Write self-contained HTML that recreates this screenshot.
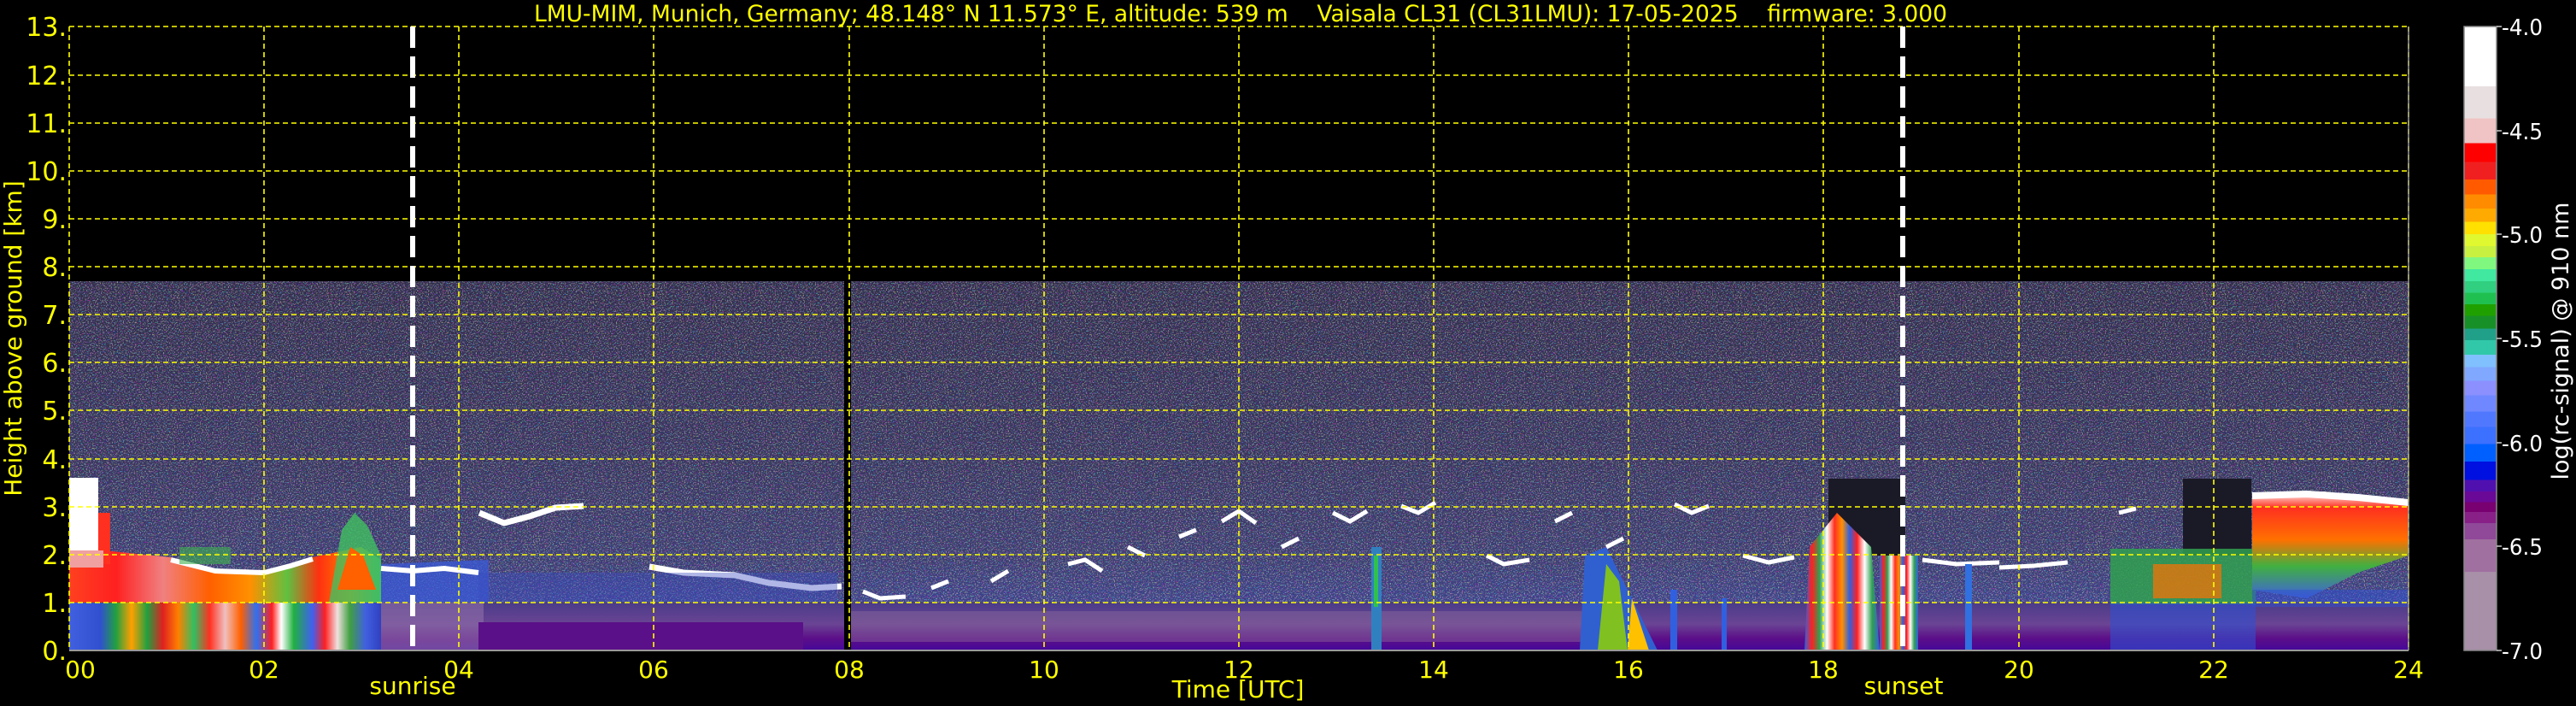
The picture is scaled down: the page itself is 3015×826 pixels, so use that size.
<!DOCTYPE html>
<html><head><meta charset="utf-8"><style>
html,body{margin:0;padding:0;background:#000;}
svg{display:block;}
text{font-family:"DejaVu Sans","Liberation Sans",sans-serif;fill:#ffff00;}
</style></head><body>
<svg width="3015" height="826" viewBox="0 0 3015 826" xmlns="http://www.w3.org/2000/svg">
<defs>
<filter id="spk" x="0" y="0" width="100%" height="100%">
<feTurbulence type="fractalNoise" baseFrequency="0.7" numOctaves="1" seed="5" result="t"/>
<feColorMatrix in="t" type="matrix" values="2.2 0 0 0 -0.7  0 2.2 0 0 -0.7  0 0 2.2 0 -0.5  0 0 0 6 -2.8"/>
</filter>
<linearGradient id="noise" x1="0" y1="0" x2="0" y2="1">
<stop offset="0" stop-color="#302c48"/>
<stop offset="0.5" stop-color="#36345a"/>
<stop offset="0.75" stop-color="#3a3c6c"/>
<stop offset="1" stop-color="#4048a0"/>
</linearGradient>
<linearGradient id="bot" x1="0" y1="0" x2="0" y2="1">
<stop offset="0" stop-color="#4a3c88"/>
<stop offset="0.45" stop-color="#6a4494"/>
<stop offset="0.75" stop-color="#5c0e88"/>
<stop offset="1" stop-color="#44089a"/>
</linearGradient>
<linearGradient id="low" x1="0" y1="0" x2="1" y2="0">
<stop offset="0" stop-color="#4060e0"/><stop offset="0.1" stop-color="#3050d0"/>
<stop offset="0.15" stop-color="#20a040"/><stop offset="0.2" stop-color="#ffa000"/>
<stop offset="0.25" stop-color="#20a040"/><stop offset="0.3" stop-color="#e02020"/>
<stop offset="0.35" stop-color="#ff8000"/><stop offset="0.4" stop-color="#30c060"/>
<stop offset="0.45" stop-color="#ff3020"/><stop offset="0.5" stop-color="#f0c0c0"/>
<stop offset="0.55" stop-color="#ff6000"/><stop offset="0.6" stop-color="#3070f0"/>
<stop offset="0.65" stop-color="#ff2020"/><stop offset="0.68" stop-color="#ffffff"/>
<stop offset="0.72" stop-color="#20b040"/><stop offset="0.78" stop-color="#4060f0"/>
<stop offset="0.82" stop-color="#ff2020"/><stop offset="0.86" stop-color="#f0e0e0"/>
<stop offset="0.9" stop-color="#40a040"/><stop offset="0.95" stop-color="#4060e0"/>
<stop offset="1" stop-color="#3040c0"/>
</linearGradient>
<linearGradient id="mid" x1="0" y1="0" x2="1" y2="0">
<stop offset="0" stop-color="#ff4020"/><stop offset="0.15" stop-color="#ff2020"/>
<stop offset="0.3" stop-color="#f08080"/><stop offset="0.45" stop-color="#ff6000"/>
<stop offset="0.58" stop-color="#ff9000"/><stop offset="0.7" stop-color="#60c040"/>
<stop offset="0.8" stop-color="#ff3010"/><stop offset="0.9" stop-color="#ff8000"/>
<stop offset="1" stop-color="#40b080"/>
</linearGradient>
<linearGradient id="eve" x1="0" y1="0" x2="1" y2="0">
<stop offset="0" stop-color="#3060e0"/><stop offset="0.1" stop-color="#ff2020"/>
<stop offset="0.2" stop-color="#30a050"/><stop offset="0.3" stop-color="#ffffff"/>
<stop offset="0.4" stop-color="#ff3020"/><stop offset="0.5" stop-color="#ff9000"/>
<stop offset="0.6" stop-color="#3060e0"/><stop offset="0.7" stop-color="#ff2020"/>
<stop offset="0.8" stop-color="#ffffff"/><stop offset="0.9" stop-color="#30a050"/>
<stop offset="1" stop-color="#3060e0"/>
</linearGradient>
<linearGradient id="late" x1="0" y1="0" x2="0" y2="1">
<stop offset="0" stop-color="#ffffff"/><stop offset="0.15" stop-color="#ff3020"/>
<stop offset="0.45" stop-color="#ff7000"/><stop offset="0.7" stop-color="#40b040"/>
<stop offset="1" stop-color="#4060e0"/>
</linearGradient>
<linearGradient id="cb" x1="0" y1="0" x2="0" y2="1">
<stop offset="0" stop-color="#fff"/><stop offset="0.096" stop-color="#fff"/>
<stop offset="0.096" stop-color="#e8e0e0"/><stop offset="0.147" stop-color="#e8e0e0"/>
<stop offset="0.147" stop-color="#f0c4c4"/><stop offset="0.187" stop-color="#f0c4c4"/>
<stop offset="0.187" stop-color="#ff0000"/><stop offset="0.217" stop-color="#ff0000"/>
<stop offset="0.217" stop-color="#f02020"/><stop offset="0.245" stop-color="#f02020"/>
<stop offset="0.245" stop-color="#ff5a00"/><stop offset="0.269" stop-color="#ff5a00"/>
<stop offset="0.269" stop-color="#ff8c00"/><stop offset="0.292" stop-color="#ff8c00"/>
<stop offset="0.292" stop-color="#ffaa00"/><stop offset="0.313" stop-color="#ffaa00"/>
<stop offset="0.313" stop-color="#ffe000"/><stop offset="0.333" stop-color="#ffe000"/>
<stop offset="0.333" stop-color="#e0f830"/><stop offset="0.352" stop-color="#e0f830"/>
<stop offset="0.352" stop-color="#c8f040"/><stop offset="0.370" stop-color="#c8f040"/>
<stop offset="0.370" stop-color="#80f880"/><stop offset="0.389" stop-color="#80f880"/>
<stop offset="0.389" stop-color="#40e8a0"/><stop offset="0.408" stop-color="#40e8a0"/>
<stop offset="0.408" stop-color="#30d080"/><stop offset="0.427" stop-color="#30d080"/>
<stop offset="0.427" stop-color="#20c050"/><stop offset="0.445" stop-color="#20c050"/>
<stop offset="0.445" stop-color="#20a000"/><stop offset="0.464" stop-color="#20a000"/>
<stop offset="0.464" stop-color="#189028"/><stop offset="0.484" stop-color="#189028"/>
<stop offset="0.484" stop-color="#20a088"/><stop offset="0.503" stop-color="#20a088"/>
<stop offset="0.503" stop-color="#30c8a8"/><stop offset="0.526" stop-color="#30c8a8"/>
<stop offset="0.526" stop-color="#80c0ff"/><stop offset="0.546" stop-color="#80c0ff"/>
<stop offset="0.546" stop-color="#80a8ff"/><stop offset="0.568" stop-color="#80a8ff"/>
<stop offset="0.568" stop-color="#8c90ff"/><stop offset="0.591" stop-color="#8c90ff"/>
<stop offset="0.591" stop-color="#7088ff"/><stop offset="0.617" stop-color="#7088ff"/>
<stop offset="0.617" stop-color="#5078ff"/><stop offset="0.642" stop-color="#5078ff"/>
<stop offset="0.642" stop-color="#3c70ff"/><stop offset="0.669" stop-color="#3c70ff"/>
<stop offset="0.669" stop-color="#0060ff"/><stop offset="0.697" stop-color="#0060ff"/>
<stop offset="0.697" stop-color="#0010e0"/><stop offset="0.727" stop-color="#0010e0"/>
<stop offset="0.727" stop-color="#5010b0"/><stop offset="0.745" stop-color="#5010b0"/>
<stop offset="0.745" stop-color="#6a0898"/><stop offset="0.762" stop-color="#6a0898"/>
<stop offset="0.762" stop-color="#780070"/><stop offset="0.778" stop-color="#780070"/>
<stop offset="0.778" stop-color="#882088"/><stop offset="0.796" stop-color="#882088"/>
<stop offset="0.796" stop-color="#904898"/><stop offset="0.822" stop-color="#904898"/>
<stop offset="0.822" stop-color="#a070a0"/><stop offset="0.874" stop-color="#a070a0"/>
<stop offset="0.874" stop-color="#a890a8"/><stop offset="1" stop-color="#a890a8"/>
</linearGradient>
</defs>

<!-- noise region -->
<rect x="81" y="329" width="2738" height="432" fill="url(#noise)"/>
<rect x="81" y="329" width="2738" height="432" filter="url(#spk)" opacity="0.55"/>
<rect x="81" y="705" width="2738" height="56" fill="url(#bot)"/>
<rect x="446" y="705" width="120" height="56" fill="#9070a8" opacity="0.6"/>
<rect x="560" y="728" width="380" height="33" fill="#5a1088"/>
<rect x="994" y="715" width="900" height="36" fill="#8a6a9c" opacity="0.45"/>
<!-- evening darker region -->
<rect x="2140" y="560" width="90" height="90" fill="#1a1a26"/>
<rect x="2555" y="560" width="80" height="90" fill="#1a1a26"/>

<!-- early boundary layer -->
<rect x="81" y="700" width="365" height="61" fill="url(#low)"/>
<polygon points="81,640 200,652 252,666 309,668 340,660 366,652 423,640 446,655 446,705 81,705" fill="url(#mid)"/>
<polyline points="200,655 252,668 309,670 340,662 366,654" fill="none" stroke="#fff" stroke-width="6"/>
<polygon points="385,705 400,620 415,600 430,615 446,650 446,705" fill="#40c060" opacity="0.8"/>
<polygon points="395,690 410,640 425,650 440,690" fill="#ff6000"/>
<rect x="81" y="559" width="34" height="85" fill="#ffffff"/>
<rect x="115" y="600" width="14" height="60" fill="#ff3020"/>
<rect x="81" y="644" width="40" height="20" fill="#f0a0a0"/>
<rect x="210" y="640" width="60" height="20" fill="#40b050" opacity="0.6"/>

<!-- post sunrise -->
<polygon points="446,660 572,655 572,705 446,705" fill="#3a5ad8" opacity="0.75"/>
<polyline points="446,665 483,668 520,665 560,670" fill="none" stroke="#fff" stroke-width="6"/>
<polyline points="561,600 590,612 620,604 650,594 683,592" fill="none" stroke="#fff" stroke-width="7"/>
<polyline points="760,663 800,670 860,673 900,682 950,688 985,686" fill="none" stroke="#fff" stroke-width="7"/>
<rect x="560" y="670" width="420" height="35" fill="#3a4cc0" opacity="0.4"/>

<!-- scattered clouds midday -->
<g fill="none" stroke="#fff" stroke-width="5">
<polyline points="1010,692 1030,700 1060,698"/>
<polyline points="1090,688 1110,680"/>
<polyline points="1160,680 1180,668"/>
<polyline points="1250,660 1270,655 1290,668"/>
<polyline points="1320,640 1340,650"/>
<polyline points="1380,628 1400,620"/>
<polyline points="1430,610 1450,598 1470,612"/>
<polyline points="1500,640 1520,630"/>
<polyline points="1560,600 1580,610 1600,598"/>
<polyline points="1640,592 1660,600 1680,588"/>
<polyline points="1740,650 1760,660 1790,655"/>
<polyline points="1820,610 1840,600"/>
<polyline points="1880,640 1900,630"/>
<polyline points="1960,590 1980,600 2000,592"/>
<polyline points="2040,650 2070,658 2100,652"/>
<polyline points="2250,655 2290,660 2340,658"/>
<polyline points="2340,664 2380,662 2420,658"/>
<polyline points="2480,600 2500,595"/>
</g>

<!-- columns -->
<rect x="1605" y="640" width="12" height="121" fill="#3080c0"/>
<rect x="1608" y="650" width="5" height="60" fill="#30c050"/>
<polygon points="1849,761 1855,650 1880,640 1900,680 1940,761" fill="#3060d0"/>
<polygon points="1870,761 1880,660 1895,680 1905,761" fill="#80c020"/>
<polygon points="1905,761 1910,700 1930,761" fill="#ffc000"/>
<rect x="1955" y="690" width="8" height="71" fill="#3060e0"/>
<rect x="2015" y="700" width="6" height="61" fill="#3060e0"/>
<polygon points="2112,761 2118,640 2150,600 2190,640 2200,761" fill="url(#eve)"/>
<rect x="2200" y="650" width="45" height="111" fill="url(#eve)"/>
<rect x="2300" y="660" width="8" height="101" fill="#3070e0"/>

<!-- late evening -->
<rect x="2470" y="642" width="170" height="65" fill="#30a050" opacity="0.85"/>
<rect x="2520" y="660" width="80" height="40" fill="#ff7000" opacity="0.7"/>
<rect x="2470" y="705" width="170" height="56" fill="#3050d0" opacity="0.6"/>
<polygon points="2636,577 2720,575 2760,580 2819,585 2819,650 2760,670 2700,700 2636,690" fill="url(#late)"/>
<polyline points="2636,580 2700,578 2760,582 2819,588" fill="none" stroke="#fff" stroke-width="8"/>
<rect x="2636" y="690" width="183" height="20" fill="#3050d0" opacity="0.5"/>

<!-- instrument gap -->
<rect x="988" y="329" width="8" height="432" fill="#000"/>

<!-- grid -->
<g stroke="#ffff00" stroke-width="1.6" stroke-dasharray="6,4" fill="none">
<path d="M81 705H2819M81 649H2819M81 593H2819M81 537H2819M81 480H2819M81 424H2819M81 368H2819M81 312H2819M81 256H2819M81 200H2819M81 144H2819M81 88H2819M81 31H2819"/>
<path d="M81 31V761M309 31V761M537 31V761M765 31V761M994 31V761M1222 31V761M1450 31V761M1678 31V761M1906 31V761M2134 31V761M2363 31V761M2591 31V761M2819 31V761"/>
</g>
<line x1="81" y1="761" x2="2819" y2="761" stroke="#999" stroke-width="2"/>
<line x1="2819" y1="31" x2="2819" y2="761" stroke="#999" stroke-width="1.5"/>
<!-- sunrise/sunset -->
<g stroke="#fff" stroke-width="6" stroke-dasharray="25,10">
<line x1="483" y1="31" x2="483" y2="761"/>
<line x1="2227" y1="31" x2="2227" y2="761"/>
</g>

<!-- title -->
<text x="1452" y="25" font-size="27" text-anchor="middle" textLength="1654" lengthAdjust="spacingAndGlyphs" xml:space="preserve">LMU-MIM, Munich, Germany; 48.148° N 11.573° E, altitude: 539 m    Vaisala CL31 (CL31LMU): 17-05-2025    firmware: 3.000</text>

<!-- y ticks -->
<g font-size="30" text-anchor="end">
<text x="78" y="42">13.</text><text x="78" y="99">12.</text><text x="78" y="155">11.</text>
<text x="78" y="211">10.</text><text x="78" y="267">9.</text><text x="78" y="323">8.</text>
<text x="78" y="379">7.</text><text x="78" y="435">6.</text><text x="78" y="491">5.</text>
<text x="78" y="548">4.</text><text x="78" y="604">3.</text><text x="78" y="660">2.</text>
<text x="78" y="716">1.</text><text x="78" y="772">0.</text>
</g>
<text transform="translate(25,396) rotate(-90)" font-size="28" text-anchor="middle">Height above ground [km]</text>

<!-- x ticks -->
<g font-size="28" text-anchor="middle">
<text x="94" y="793">00</text><text x="309" y="793">02</text><text x="537" y="793">04</text>
<text x="765" y="793">06</text><text x="994" y="793">08</text><text x="1222" y="793">10</text>
<text x="1450" y="793">12</text><text x="1678" y="793">14</text><text x="1906" y="793">16</text>
<text x="2134" y="793">18</text><text x="2363" y="793">20</text><text x="2591" y="793">22</text>
<text x="2819" y="793">24</text>
<text x="1449" y="816">Time [UTC]</text>
<text x="483" y="812">sunrise</text>
<text x="2228" y="812">sunset</text>
</g>

<!-- colorbar -->
<rect x="2884" y="31" width="38" height="730" fill="url(#cb)"/>
<rect x="2884" y="31" width="38" height="730" fill="none" stroke="#888" stroke-width="1.5"/>
<g stroke="#ccc" stroke-width="1.5">
<line x1="2922" y1="31" x2="2928" y2="31"/><line x1="2922" y1="153" x2="2928" y2="153"/>
<line x1="2922" y1="274" x2="2928" y2="274"/><line x1="2922" y1="396" x2="2928" y2="396"/>
<line x1="2922" y1="518" x2="2928" y2="518"/><line x1="2922" y1="639" x2="2928" y2="639"/>
<line x1="2922" y1="761" x2="2928" y2="761"/>
</g>
<g font-size="26">
<text x="2928" y="41" style="fill:#fff" textLength="48" lengthAdjust="spacingAndGlyphs">-4.0</text>
<text x="2928" y="163" style="fill:#fff" textLength="48" lengthAdjust="spacingAndGlyphs">-4.5</text>
<text x="2928" y="284" style="fill:#fff" textLength="48" lengthAdjust="spacingAndGlyphs">-5.0</text>
<text x="2928" y="406" style="fill:#fff" textLength="48" lengthAdjust="spacingAndGlyphs">-5.5</text>
<text x="2928" y="528" style="fill:#fff" textLength="48" lengthAdjust="spacingAndGlyphs">-6.0</text>
<text x="2928" y="649" style="fill:#fff" textLength="48" lengthAdjust="spacingAndGlyphs">-6.5</text>
<text x="2928" y="771" style="fill:#fff" textLength="48" lengthAdjust="spacingAndGlyphs">-7.0</text>
</g>
<text transform="translate(3006,399) rotate(-90)" font-size="27" text-anchor="middle" style="fill:#fff" textLength="325" lengthAdjust="spacingAndGlyphs">log(rc-signal) @ 910 nm</text>
</svg>
</body></html>
